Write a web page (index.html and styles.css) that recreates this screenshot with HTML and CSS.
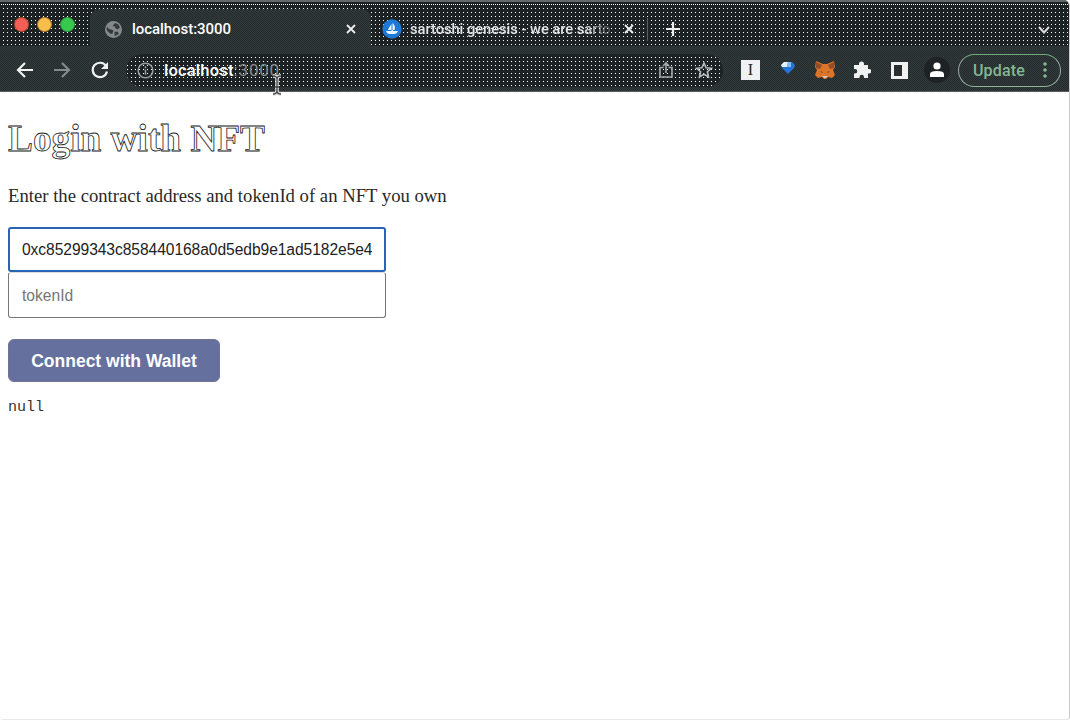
FILE: index.html
```
<!DOCTYPE html>
<html lang="en">
<head>
<meta charset="utf-8">
<title>localhost:3000</title>
<link rel="stylesheet" href="styles.css">
</head>
<body>
<div class="window">
  <header class="tabs">
    <div class="lights"><i class="red"></i><i class="yellow"></i><i class="green"></i></div>
    <div class="tab active">
      <svg class="globe" viewBox="0 0 16 16" width="17" height="17"><circle cx="8" cy="8" r="8" fill="#85898b"/><path d="M2 5Q3 8 6 8L8 9L7 12L5 12L3 10L1.500 8ZM9 2Q13 2 14 6L12 8L10 7L9 5L7 5ZM9 10L12 10L13 12Q11 14 9 14Z" fill="#343a3c"/></svg>
      <span class="title">localhost:3000</span>
      <svg class="close" viewBox="0 0 10 10" width="10" height="10"><path d="M1 1L9 9M9 1L1 9"/></svg>
    </div>
    <div class="tab other">
      <svg viewBox="0 0 20 20" width="20" height="20"><circle cx="10" cy="10" r="9.700" fill="#1d79d5"/><path d="M9.500 5V11H6Q7 8 9.500 5ZM10.500 4Q14 7 12.500 11H10.500ZM4 12H9.500V11H11V12H16Q15 15 12 15H7Q5 15 4 12Z" fill="#e8f3ff"/></svg>
      <span class="title fade">sartoshi genesis - we are sarto</span>
      <svg class="close" viewBox="0 0 10 10" width="10" height="10"><path d="M1 1L9 9M9 1L1 9"/></svg>
    </div>
    <i class="divider"></i>
    <svg class="plus" viewBox="0 0 14 14" width="14" height="14"><path d="M7 0V14M0 7H14"/></svg>
    <svg class="chevron" viewBox="0 0 12 8" width="12" height="8"><path d="M1 1L6 6.500L11 1"/></svg>
  </header>
  <nav class="toolbar">
    <svg class="back" viewBox="0 0 18 16" width="18" height="16"><path d="M17 8H2M9 1L2 8L9 15"/></svg>
    <svg class="forward" viewBox="0 0 18 16" width="18" height="16"><path d="M1 8H16M9 1L16 8L9 15"/></svg>
    <svg class="reload" viewBox="0 0 18 18" width="18" height="18"><path d="M15 5A7.200 7.200 0 1 0 16 10.500" /><path d="M17 1V8H10Z" fill="#f1f2f2" stroke="none"/></svg>
    <div class="address">
      <svg class="info" viewBox="0 0 18 18" width="17" height="17"><circle cx="9" cy="9" r="7.800"/><path d="M9 8V13.500M9 4.500V6.500"/></svg>
      <span class="url"><b>localhost</b><span class="port">:3000</span></span>
      <svg class="share" viewBox="0 0 14 18" width="14" height="18"><path d="M4.500 6.500H1V16H13V6.500H9.500M7 12V2M4 5L7 2L10 5"/></svg>
      <svg class="star" viewBox="0 0 18 18" width="18" height="18"><path d="M9 2L11.100 6.800L16.300 7.300L12.400 10.700L13.500 15.900L9 13.200L4.500 15.900L5.600 10.700L1.700 7.300L6.900 6.800Z"/></svg>
    </div>
    <div class="instapaper"><span>I</span></div>
    <svg class="gem" viewBox="0 0 14 14" width="14" height="14"><path d="M3 1H11L14 4L13 7L7 13L1 7L0 4Z" fill="#2475d5"/><path d="M3 1H7L6 6H1L0 4Z" fill="#e5f2ff"/><path d="M7 1H10L10 6H6Z" fill="#86bbf5"/></svg>
    <svg class="fox" viewBox="0 0 20 18" width="20" height="18"><path d="M1 0L8 3H12L19 0L20 6L18 9L20 14L17 17L13 16L11 18H9L7 16L3 17L0 14L2 9L0 6Z" fill="#dc7529"/><path d="M1 1L7 4L5 8L1 7ZM19 1L13 4L15 8L19 7Z" fill="#944d27"/><path d="M5 10L8 11L7 12ZM15 10L12 11L13 12Z" fill="#6b4634"/><path d="M7 15H13L11 17H9Z" fill="#d9c4b5"/></svg>
    <svg class="puzzle" viewBox="0 0 18 18" width="18" height="18"><path d="M2 4H6V3A2.300 2.300 0 0 1 11 3V4H15V8H16A2 2 0 0 1 16 12.500H15V17H11V16A2.100 2.100 0 0 0 6.500 16V17H1V12.500H2A2.200 2.200 0 0 0 2 8H1V4Z" fill="#f0f1f1"/></svg>
    <div class="panel"></div>
    <div class="avatar"><svg viewBox="0 0 16 16" width="16" height="16"><circle cx="8" cy="4" r="3.600" fill="#fff"/><path d="M1 15V12Q1 9 8 9T15 12V15Z" fill="#fff"/></svg></div>
    <div class="update"><span>Update</span><svg viewBox="0 0 4 16" width="4" height="16"><circle cx="2" cy="2" r="1.800"/><circle cx="2" cy="8" r="1.800"/><circle cx="2" cy="14" r="1.800"/></svg></div>
  </nav>
  <main class="page">
    <h1>Login with NFT</h1>
    <p class="intro">Enter the contract address and tokenId of an NFT you own</p>
    <input class="field focused" type="text" value="0xc85299343c858440168a0d5edb9e1ad5182e5e4">
    <input class="field token" type="text" placeholder="tokenId">
    <button class="connect" type="button">Connect with Wallet</button>
    <pre class="result">null</pre>
  </main>
  <svg class="cursor" viewBox="0 0 12 22" width="12" height="22"><path d="M2 2Q6 2 6 5Q6 2 10 2M6 5V18M2 20Q6 20 6 17Q6 20 10 20M4 13H8" stroke="#ddd" stroke-width="3.500"/><path d="M2 2Q6 2 6 5Q6 2 10 2M6 5V18M2 20Q6 20 6 17Q6 20 10 20M4 13H8" stroke="#444" stroke-width="1.300"/></svg>
</div>
</body>
</html>
```
FILE: styles.css
```
* { box-sizing: border-box; }
body { margin: 0; overflow: hidden; background: #fff; }
.window { position: relative; display: flex; flex-direction: column; width: 1070px; height: 720px; border-right: 1px solid #c9c9c9; border-bottom: 1px solid #e8e8e8; border-radius: 0 6px 3px 3px; overflow: hidden; }
svg { display: block; flex: none; fill: none; stroke-linecap: butt; }
.tabs { display: flex; height: 49px; flex: none; border-top: 2px solid #63686a; color: #e2e4e5; font: 500 15px Roboto, "Liberation Sans", sans-serif;
  background: linear-gradient(#2c3435, #2c3435) 0 44px / 100% 3px no-repeat, conic-gradient(at 1px 1px, transparent 75%, #fff 0) 1px 2px / 2px 48px repeat-x, conic-gradient(at 1px 1px, transparent 75%, #fff 0) 3px 2px / 4px 4px #1d2225; }
.lights { display: flex; gap: 8px; width: 90px; padding: 15px 0 0 14px; }
.lights i { width: 15px; height: 15px; border-radius: 50%; border: 1px solid; }
.lights .red { background: #f55d57; border-color: #a44726; }
.lights .yellow { background: #f8be4b; border-color: #b87832; }
.lights .green { background: #37c84e; border-color: #329a43; }
.tab { display: flex; align-items: center; }
.active { width: 281px; height: 40px; margin-top: 7px; padding: 0 15px 0 15px; border-radius: 9px 9px 0 0; background: repeating-conic-gradient(#232b2c 0 25%, #323a3b 0 50%) 0 0 / 2px 2px; }
.active .title { flex: 1; margin-left: 10px; color: #fff; letter-spacing: -.05px; }
.close { stroke: #eee; stroke-width: 1.8; }
.other { width: 266px; height: 40px; margin-top: 7px; padding-left: 11px; }
.fade { width: 204px; margin: 0 10px 0 8px; white-space: nowrap; font-size: 14.700px; letter-spacing: -.03px; -webkit-mask-image: linear-gradient(90deg, #000 175px, transparent 206px); }
.divider { width: 1px; height: 23px; margin: 16px 0 0 10px; background: #5a5f61; }
.plus { margin: 20px 0 0 18px; stroke: #eee; stroke-width: 2.2; }
.chevron { margin: 24px 19px 0 auto; stroke: #ddd; stroke-width: 2; }
.toolbar { display: flex; align-items: center; height: 43px; flex: none; padding-left: 16px; border-bottom: 1px solid #5a5e5f; background: repeating-conic-gradient(#232b2c 0 25%, #323a3b 0 50%) 0 0 / 2px 2px; }
.back, .forward, .reload { stroke: #f1f2f2; stroke-width: 2.2; }
.forward { margin-left: 19px; stroke: #858a8b; }
.reload { margin-left: 20px; }
.address { display: flex; align-items: center; width: 597px; height: 33px; margin-left: 17px; padding-left: 11px; border-radius: 17px; background: conic-gradient(at 1px 1px, transparent 75%, #fff 0) 1px 3px / 4px 4px #1d2225; }
.info { stroke: #9a9ea0; stroke-width: 1.6; }
.url { flex: 1; margin-left: 10px; color: #858a8c; font: 16.500px Roboto, "Liberation Sans", sans-serif; }
.url b { color: #fff; font-weight: 500; letter-spacing: .2px; }
.port { font-size: 17px; letter-spacing: .8px; }
.share { stroke: #a5a8a9; stroke-width: 1.6; }
.star { margin: 0 10px 0 22px; stroke: #b8babb; stroke-width: 1.6; }
.instapaper { display: grid; place-items: center; width: 19px; height: 20px; margin-left: 18px; background: #f0f1f2; color: #222; font: 16px "Liberation Serif", serif; }
.gem { margin: 0 0 4px 21px; }
.fox { margin-left: 20px; }
.puzzle { margin-left: 18px; }
.panel { width: 17px; height: 17px; margin-left: 20px; border: solid #f0f1f1; border-width: 3px 6px 3px 3px; background: #292e30; }
.avatar { display: grid; place-items: center; width: 26px; height: 26px; margin-left: 16px; border-radius: 50%; background: #1e2224; }
.update { display: flex; align-items: center; width: 103px; height: 33px; margin-left: 8px; padding: 0 13px 0 14px; border: 1.500px solid #a6aaa9; border-top-color: #70aa7d; border-bottom-color: #91b29a; border-radius: 17px; color: #83b894; font: 500 16px Roboto, "Liberation Sans", sans-serif; letter-spacing: .15px; }
.update svg { margin-left: auto; fill: #83b894; }
.page { display: flex; flex-direction: column; align-items: flex-start; padding: 25px 8px 0; }
h1 { margin: 0; color: #fff; -webkit-text-stroke: 0.8px #222; font: bold 37.300px/43px "Liberation Serif", serif; white-space: nowrap; }
.intro { margin: 25px 0 0; color: #292929; font: 18.700px/22px "Liberation Serif", serif; white-space: nowrap; }
.field { width: 378px; height: 46px; margin: 0; padding: 0 13px; border: 1px solid #777; border-radius: 3px; outline: 0; background: #fff; color: #222; font: 15.600px "Liberation Sans", sans-serif; }
.focused { margin-top: 20px; height: 45px; border: 2px solid #2864b6; padding: 0 12px; letter-spacing: -.06px; }
.field::placeholder { color: #777; opacity: 1; }
.token { border-top-color: #ddd; padding-top: 2px; }
.connect { width: 212px; height: 43px; margin: 21px 0 0; padding: 2px 0 0; border: 1px solid #717391; border-radius: 6px; background: #65709f; color: #fff; font: bold 17.500px "Liberation Sans", sans-serif; }
.result { margin: 17px 0 0; color: #333; font: 15px/18px "Liberation Mono", monospace; }
.cursor { position: absolute; left: 271px; top: 74px; }
```
